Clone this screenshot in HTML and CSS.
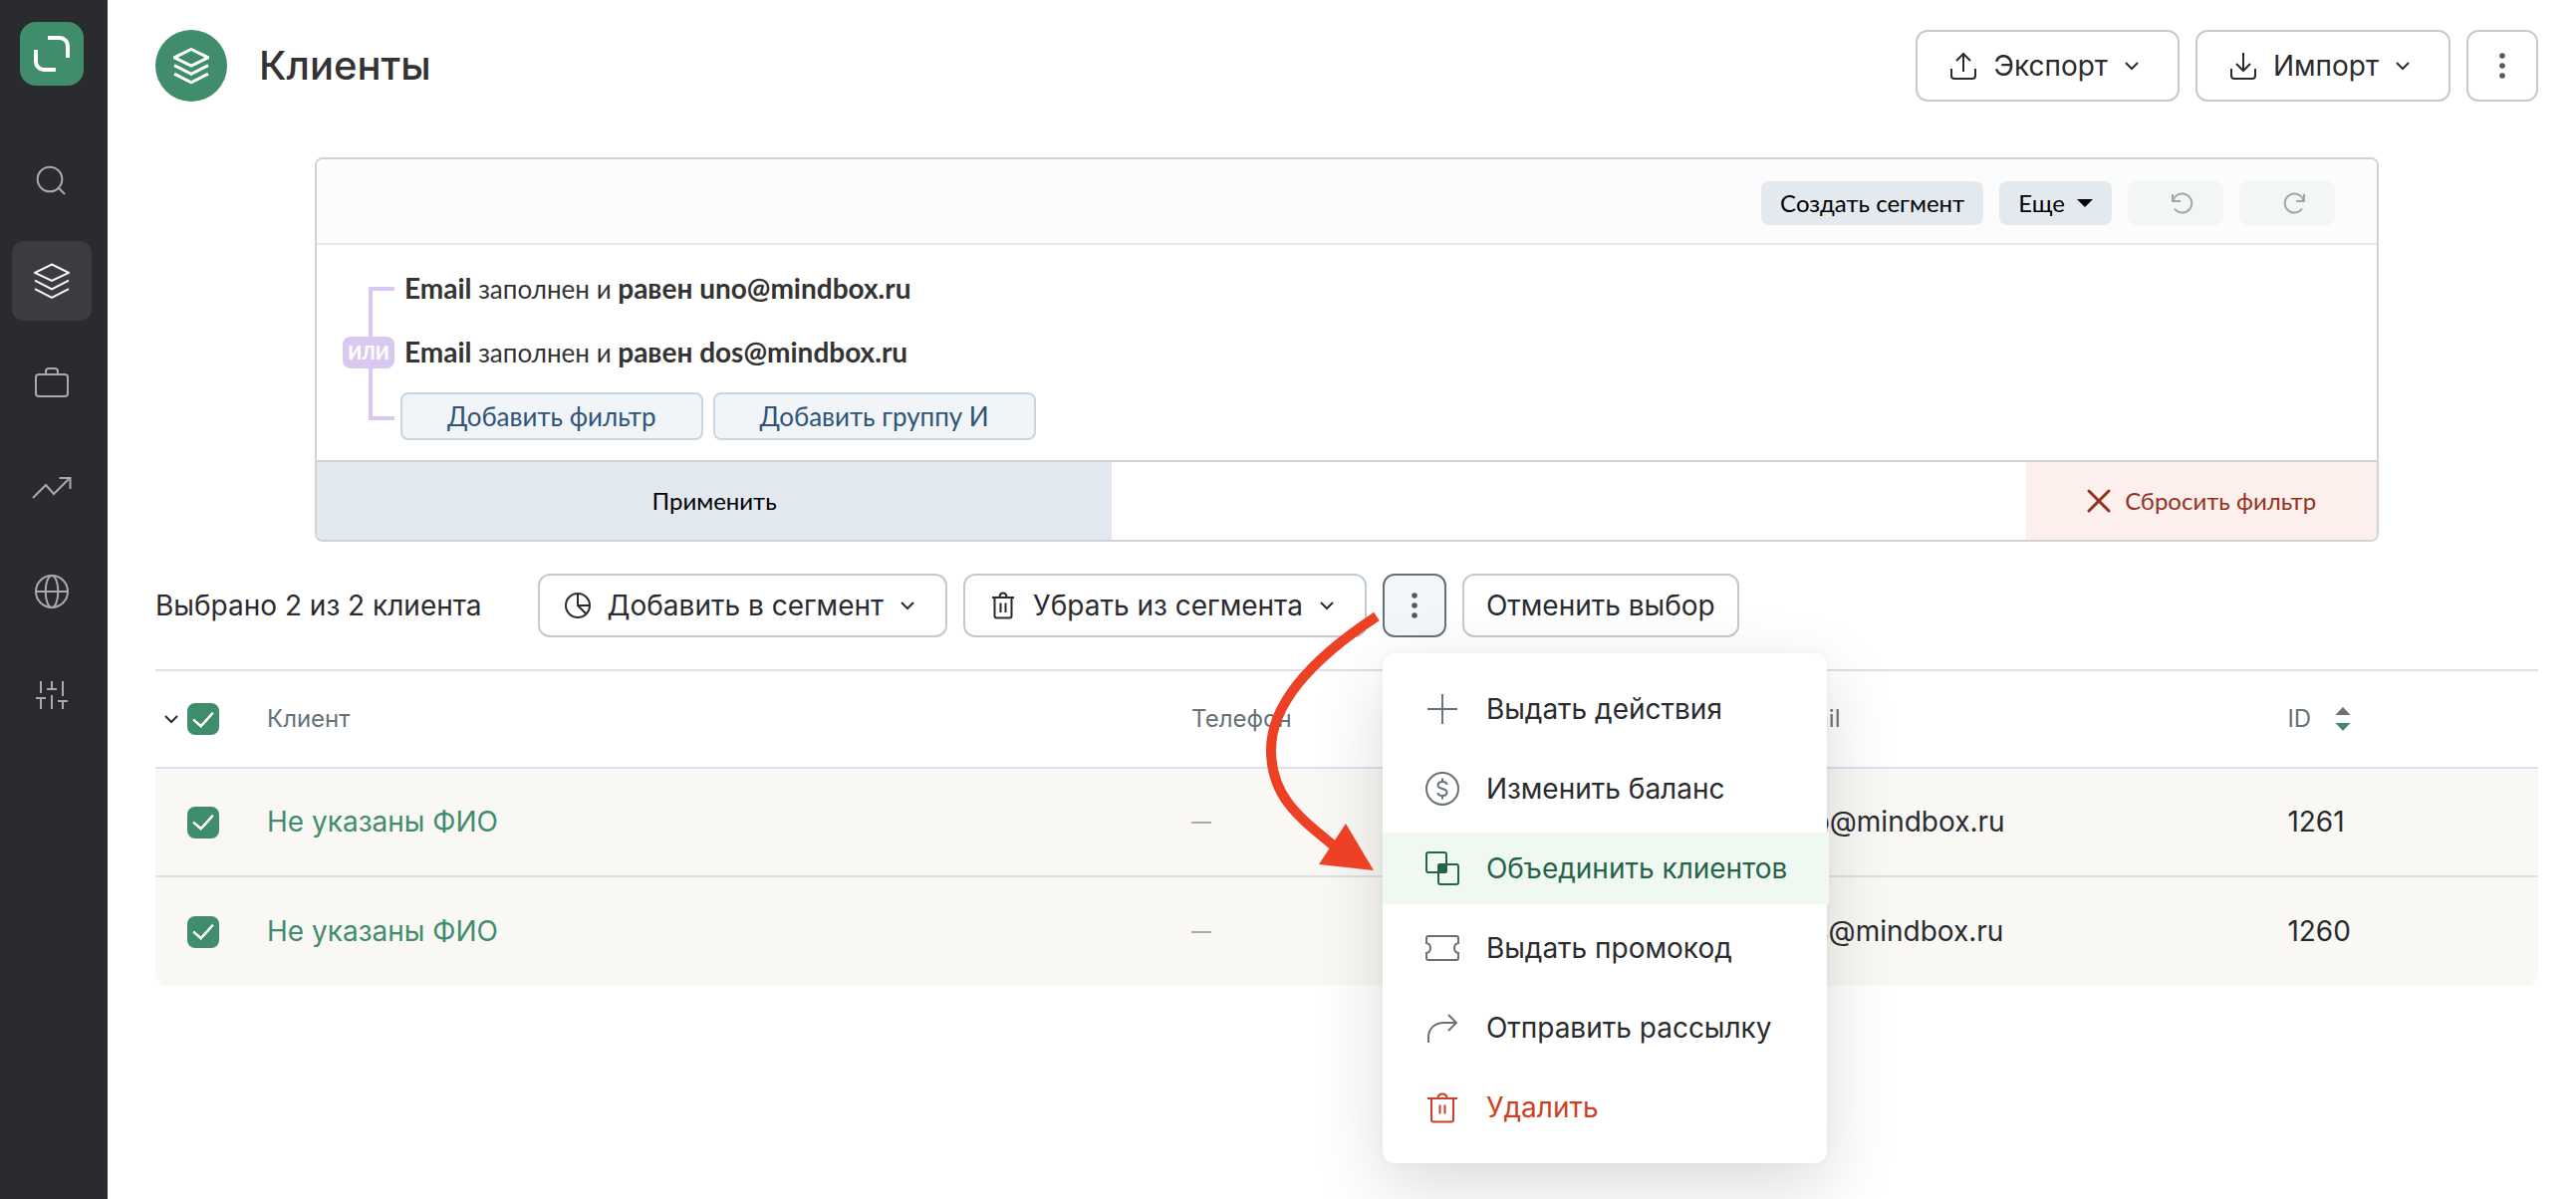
FILE: index.html
```html
<!DOCTYPE html>
<html lang="ru">
<head>
<meta charset="utf-8">
<meta name="viewport" content="width=device-width, initial-scale=1">
<title>Клиенты</title>
<link rel="stylesheet" href="styles.css">
</head>
<body>
<svg class="sprite" aria-hidden="true">
  <symbol id="layers" viewBox="0 0 36 36"><path d="M18 1.5 35 9.8 18 18 1 9.8zM1 17.7 18 26.3 35 17.7M1 26.2 18 34.8 35 26.2"/></symbol>
  <symbol id="chevron" viewBox="0 0 16 16"><path d="m2 5 6 6 6-6"/></symbol>
  <symbol id="dots" viewBox="0 0 28 28"><g fill="currentColor" stroke="none"><circle cx="14" cy="4" r="2.8"/><circle cx="14" cy="14" r="2.8"/><circle cx="14" cy="24" r="2.8"/></g></symbol>
</svg>
<div class="app">
  <nav class="sidebar" aria-label="Разделы">
    <a class="logo" href="#" aria-label="Mindbox"><svg viewBox="0 0 64 64"><path d="M28 16H40a8 8 0 0 1 8 8V36M16 28V40a8 8 0 0 0 8 8H36"/></svg></a>
    <div class="sidebar-items">
      <a class="nav-item" href="#" aria-label="Поиск"><svg viewBox="0 0 36 36"><circle cx="16" cy="20" r="12.3"/><path d="m25 29 6 6"/></svg></a>
      <a class="nav-item nav-item-active" href="#" aria-label="Данные"><svg><use href="#layers"/></svg></a>
      <a class="nav-item" href="#" aria-label="Кампании"><svg viewBox="0 0 36 36"><rect x="2" y="8" width="32" height="22" rx="3"/><path d="M12 8V5q0-3 3-3h6q3 0 3 3v3"/></svg></a>
      <a class="nav-item" href="#" aria-label="Отчёты"><svg viewBox="0 0 36 36"><path d="m-1 28 13-13 8 9L36 8M25.500 8H36.500V19"/></svg></a>
      <a class="nav-item" href="#" aria-label="Интеграции"><svg viewBox="0 0 36 36"><circle cx="18" cy="18" r="16"/><ellipse cx="18" cy="18" rx="6.300" ry="16"/><path d="M2 18h32"/></svg></a>
      <a class="nav-item" href="#" aria-label="Настройки"><svg viewBox="0 0 36 36"><path d="M7 4v12M2 21h10M7 21v11M18 4v8M13 12h10M18 18v14M29 4v15M24 24h10M29 24v8"/></svg></a>
    </div>
  </nav>

  <main class="content">
    <header class="page-header">
      <span class="page-icon"><svg><use href="#layers"/></svg></span>
      <h1>Клиенты</h1>
      <div class="page-actions">
        <button class="button button-large"><svg class="icon" viewBox="0 0 28 28"><path d="M14 20V2M7 9l7-7 7 7M2 17v7q0 3 3 3h18q3 0 3-3v-7"/></svg>Экспорт<svg class="chevron"><use href="#chevron"/></svg></button>
        <button class="button button-large"><svg class="icon" viewBox="0 0 28 28"><path d="M14 1v18M7 12l7 7 7-7M2 17v7q0 3 3 3h18q3 0 3-3v-7"/></svg>Импорт<svg class="chevron"><use href="#chevron"/></svg></button>
        <button class="button button-large button-dots" aria-label="Ещё"><svg class="icon"><use href="#dots"/></svg></button>
      </div>
    </header>

    <section class="filter">
      <div class="filter-toolbar">
        <button class="tool">Создать сегмент</button>
        <button class="tool">Еще<span class="caret"></span></button>
        <button class="tool tool-history" disabled aria-label="Отменить"><svg viewBox="0 0 24 24"><path d="M2 3v7h8M2.500 10A9.500 9.500 0 1 1 4 17.500"/></svg></button>
        <button class="tool tool-history" disabled aria-label="Повторить"><svg viewBox="0 0 24 24"><path d="M22 3v7h-8M21.500 10A9.500 9.500 0 1 0 20 17.500"/></svg></button>
      </div>
      <div class="filter-body">
        <div class="bracket"><span class="bracket-label">ИЛИ</span></div>
        <div class="conditions">
          <p class="condition"><b>Email</b> заполнен и <b>равен uno@mindbox.ru</b></p>
          <p class="condition"><b>Email</b> заполнен и <b>равен dos@mindbox.ru</b></p>
          <div class="condition-actions">
            <button class="add-button">Добавить фильтр</button>
            <button class="add-button">Добавить группу И</button>
          </div>
        </div>
      </div>
      <div class="filter-footer">
        <button class="apply">Применить</button>
        <button class="reset"><svg viewBox="0 0 24 24"><path d="m2 2 20 20M22 2 2 22"/></svg>Сбросить фильтр</button>
      </div>
    </section>

    <div class="selection">
      <span class="selection-count">Выбрано 2 из 2 клиента</span>
      <button class="button"><svg class="icon" viewBox="0 0 28 28"><path d="M14 2a12 12 0 1 0 0 24A12 12 0 1 0 14 2V14l8.500 8.500M14 14H26"/></svg>Добавить в сегмент<svg class="chevron"><use href="#chevron"/></svg></button>
      <button class="button"><svg class="icon" viewBox="0 0 28 28"><path d="M3 6h22M5.500 6v18.500q0 2 2 2h13q2 0 2-2V6M10.500 6c0-3 1.500-4.500 3.500-4.500s3.500 1.500 3.500 4.500M11.500 11.500v9.500M16.500 11.500v9.500"/></svg>Убрать из сегмента<svg class="chevron"><use href="#chevron"/></svg></button>
      <div class="more">
        <button class="button button-dots button-pressed" aria-label="Другие действия" aria-expanded="true"><svg class="icon"><use href="#dots"/></svg></button>
        <div class="menu" role="menu">
          <button class="menu-item" role="menuitem"><svg viewBox="0 0 36 36"><path d="M3 18h30M18 3v30"/></svg>Выдать действия</button>
          <button class="menu-item" role="menuitem"><svg viewBox="0 0 36 36"><circle cx="18" cy="18" r="16"/><path d="M22.500 14c0-2-2-3-4.500-3s-4.500 1-4.500 3.500 2 3 4.500 3.500 4.500 1 4.500 3.500-2 3.500-4.500 3.500-4.500-1-4.500-3M18 7.500V11M18 25v3.500"/></svg>Изменить баланс</button>
          <button class="menu-item menu-item-active" role="menuitem"><svg viewBox="0 0 36 36"><rect x="2" y="2" width="20" height="20" rx="2"/><rect x="14" y="14" width="20" height="20" rx="2"/><rect x="14" y="14" width="8" height="8" rx="2" fill="currentColor"/></svg>Объединить клиентов</button>
          <button class="menu-item" role="menuitem"><svg viewBox="0 0 36 36"><path d="M4 6h28q2 0 2 2v5c-2.500.5-4 2.500-4 5s1.500 4.500 4 5v5q0 2-2 2H4q-2 0-2-2v-5c2.500-.5 4-2.500 4-5s-1.500-4.500-4-5V8q0-2 2-2z"/></svg>Выдать промокод</button>
          <button class="menu-item" role="menuitem"><svg viewBox="0 0 36 36"><path d="M4 33v-5C4 19 10 13 20 13H32M24 5l8 8-8 8"/></svg>Отправить рассылку</button>
          <button class="menu-item menu-item-danger" role="menuitem"><svg viewBox="0 0 36 36"><path d="M3 9h30M7 9v21.500q0 2 2 2h18q2 0 2-2V9M13.500 9c0-3 2-4.500 4.500-4.500s4.500 1.500 4.500 4.500M15.500 15.500v9M20.500 15.500v9"/></svg>Удалить</button>
        </div>
        <svg class="pointer" viewBox="0 0 120 280" aria-hidden="true"><path class="pointer-line" d="M114 13C50 55 8 100 8 147S36 215 72 244"/><path class="pointer-head" d="m111 268-28-47-27 41z"/></svg>
      </div>
      <button class="button button-plain">Отменить выбор</button>
    </div>

    <table class="clients">
      <colgroup><col class="col-check"><col class="col-client"><col class="col-phone"><col class="col-email"><col></colgroup>
      <thead>
        <tr>
          <th><div class="check-all"><button class="expand" aria-label="Варианты выбора"><svg class="chevron"><use href="#chevron"/></svg></button><input type="checkbox" checked aria-label="Выбрать всех"></div></th>
          <th>Клиент</th>
          <th>Телефон</th>
          <th>Email</th>
          <th><button class="sort">ID<svg viewBox="0 0 16 24"><path fill="#667278" d="M8 0l7.500 8H.5z"/><path fill="#3f8d6b" d="M8 24l7.500-8H.5z"/></svg></button></th>
        </tr>
      </thead>
      <tbody>
        <tr>
          <td><div class="check-row"><input type="checkbox" checked aria-label="Выбрать клиента 1261"></div></td>
          <td><a href="#">Не указаны ФИО</a></td>
          <td class="empty">—</td>
          <td>uno@mindbox.ru</td>
          <td>1261</td>
        </tr>
        <tr>
          <td><div class="check-row"><input type="checkbox" checked aria-label="Выбрать клиента 1260"></div></td>
          <td><a href="#">Не указаны ФИО</a></td>
          <td class="empty">—</td>
          <td>dos@mindbox.ru</td>
          <td>1260</td>
        </tr>
      </tbody>
    </table>
  </main>
</div>
</body>
</html>
```
FILE: styles.css
```css
:root {
  --ink: #2a2b2f;
  --muted: #667278;
  --green: #3f8d6b;
  --line: #dae1e6;
  --outline: #c0cbd4;
}

* { box-sizing: border-box; }

body {
  margin: 0;
  background: #fff;
  color: var(--ink);
  font: 28px/36px Inter, sans-serif;
}

button {
  margin: 0;
  padding: 0;
  border: 0;
  background: none;
  color: inherit;
  font: inherit;
  white-space: nowrap;
}

a { color: var(--green); text-decoration: none; }

svg {
  display: block;
  flex: none;
  fill: none;
  stroke: currentColor;
  stroke-width: 2;
  overflow: visible;
}

.sprite { position: absolute; width: 0; height: 0; }

.app { display: flex; min-height: 100vh; }

/* Sidebar */
.sidebar {
  flex: none;
  width: 108px;
  padding: 22px 0 0 12px;
  background: var(--ink);
}

.logo {
  display: block;
  width: 64px;
  height: 64px;
  margin-left: 8px;
  border-radius: 16px;
  background: var(--green);
  color: #fff;
}

.logo svg { stroke-width: 4; }

.sidebar-items { display: grid; gap: 24px; margin-top: 52px; }

.nav-item {
  display: flex;
  align-items: center;
  justify-content: center;
  width: 80px;
  height: 80px;
  border-radius: 12px;
  color: #a9aaac;
}

.nav-item svg, .page-icon svg { width: 36px; height: 36px; }
.nav-item-active { background: #3a3c40; color: #fff; }

/* Page header */
.content { flex: 1; min-width: 0; padding: 30px 38px 0 48px; }

.page-header { display: flex; align-items: center; gap: 32px; }

.page-icon {
  display: flex;
  align-items: center;
  justify-content: center;
  width: 72px;
  height: 72px;
  border-radius: 50%;
  background: var(--green);
  color: #fff;
}

.page-icon svg { stroke-width: 3; }

h1 { margin: 0; color: #333; font-size: 40px; line-height: 48px; font-weight: 500; }

.page-actions { display: flex; gap: 16px; margin-left: auto; }

.button {
  display: flex;
  align-items: center;
  justify-content: center;
  gap: 16px;
  height: 64px;
  padding: 0 30px 0 24px;
  border: 2px solid var(--outline);
  border-radius: 12px;
  background: #fff;
}

.button-large { height: 72px; padding: 0 38px 0 32px; }
.button-plain { padding: 0 22px; }
.button-dots { width: 64px; padding: 0; color: #55585c; }
.button-large.button-dots { width: 72px; }
.button-pressed { border-color: var(--muted); background: #f2f6f8; }

.icon { width: 28px; height: 28px; }
.chevron { width: 16px; height: 16px; }

/* Filter */
.filter {
  margin: 56px 160px 0;
  border: 2px solid #d2d2d2;
  border-radius: 8px;
  overflow: hidden;
  color: #333;
  font-family: Lato, "Noto Sans", sans-serif;
}

.filter-toolbar {
  display: flex;
  justify-content: flex-end;
  gap: 16px;
  padding: 22px 42px 18px;
  border-bottom: 2px solid #e2e9ef;
  background: #fcfcfc;
}

.tool {
  display: flex;
  align-items: center;
  gap: 12px;
  height: 44px;
  padding: 0 19px;
  border-radius: 8px;
  background: #e2e9ef;
  color: #000;
  font-size: 24px;
}

.caret { border: 8px solid transparent; border-top-color: #000; border-bottom: 0; }

.tool-history {
  justify-content: center;
  width: 96px;
  padding: 0 0 0 14px;
  background: #f2f6f7;
  color: #a5a5a5;
}

.tool-history svg { width: 24px; height: 24px; }

.filter-body { display: flex; gap: 6px; padding: 12px 52px 20px; }

.bracket {
  position: relative;
  width: 26px;
  margin: 30px 0 20px;
  border: 4px solid #d9c8ef;
  border-right: 0;
}

.bracket-label {
  position: absolute;
  top: 46px;
  left: -30px;
  width: 52px;
  border-radius: 8px;
  background: #d9c8ef;
  color: #fff;
  font-size: 18px;
  line-height: 32px;
  font-weight: 900;
  text-align: center;
}

.condition { margin: 0; padding-left: 4px; font-size: 26px; line-height: 64px; }
.condition b { font-size: 28px; line-height: 36px; }

.condition-actions { display: flex; gap: 10px; margin-top: 8px; }

.add-button {
  height: 48px;
  padding: 0 45px;
  border: 2px solid #c9d6e0;
  border-radius: 8px;
  background: #f1f5f8;
  color: #2f5478;
  font-size: 26px;
}

.filter-footer {
  display: flex;
  justify-content: space-between;
  border-top: 2px solid #d2d2d2;
  font-size: 24px;
}

.apply { width: 38.6%; height: 78px; background: #e2e8f0; color: #000; }

.reset {
  display: flex;
  align-items: center;
  justify-content: center;
  gap: 14px;
  width: 17%;
  background: #fcefec;
  color: #943224;
}

.reset svg { width: 24px; height: 24px; stroke-width: 3; stroke-linecap: round; }

/* Selection bar */
.selection { display: flex; align-items: center; gap: 16px; margin: 32px 0; }
.selection-count { margin-right: 40px; }

.more { position: relative; z-index: 1; }

.menu {
  position: absolute;
  top: 80px;
  left: 0;
  display: grid;
  gap: 8px;
  width: 446px;
  padding: 20px 0;
  border-radius: 12px;
  background: #fff;
  box-shadow: 0 24px 72px rgba(0, 0, 0, .14), 0 0 8px rgba(0, 0, 0, .04);
}

.menu-item {
  display: flex;
  align-items: center;
  gap: 26px;
  height: 72px;
  padding: 0 42px;
}

.menu-item svg { width: 36px; height: 36px; color: var(--muted); }
.menu-item-active { background: #eff9f2; }
.menu-item-active, .menu-item-active svg { color: #27634a; }
.menu-item-danger, .menu-item-danger svg { color: #cc4125; }

.pointer {
  position: absolute;
  top: 30px;
  left: -120px;
  width: 120px;
  height: 280px;
  pointer-events: none;
}

.pointer-line { stroke: #ed4126; stroke-width: 10; }
.pointer-head { fill: #ed4126; stroke: none; }

/* Table */
.clients {
  width: 100%;
  table-layout: fixed;
  border-spacing: 0;
}

.col-check { width: 112px; }
.col-client { width: 38.8%; }
.col-phone { width: 24.7%; }
.col-email { width: 21.3%; }

th, td { padding: 0; text-align: left; }

th {
  height: 100px;
  border-top: 2px solid var(--line);
  border-bottom: 2px solid var(--line);
  color: var(--muted);
  font-size: 24px;
  font-weight: 400;
}

td { height: 109px; padding-bottom: 2px; background: #f9f8f5; }
tr:first-child td { border-bottom: 2px solid var(--line); }
tr:last-child td:first-child { border-bottom-left-radius: 12px; }
tr:last-child td:last-child { border-bottom-right-radius: 12px; }

.check-all { display: flex; align-items: center; gap: 8px; padding-left: 8px; }
.check-row { display: flex; padding: 2px 0 0 32px; }
.expand { color: var(--ink); }
.empty { color: #aaa; font-size: 20px; font-weight: 500; }
.sort { display: flex; align-items: center; gap: 24px; }
.sort svg { width: 16px; height: 24px; stroke: none; }

input[type="checkbox"] {
  appearance: none;
  display: grid;
  place-items: center;
  width: 32px;
  height: 32px;
  margin: 0;
  border-radius: 8px;
  background: var(--green);
}

input[type="checkbox"]::after {
  content: "";
  width: 9px;
  height: 17px;
  margin-bottom: 5px;
  border: solid #fff;
  border-width: 0 3px 3px 0;
  border-radius: 1px;
  transform: rotate(42deg);
}
```
